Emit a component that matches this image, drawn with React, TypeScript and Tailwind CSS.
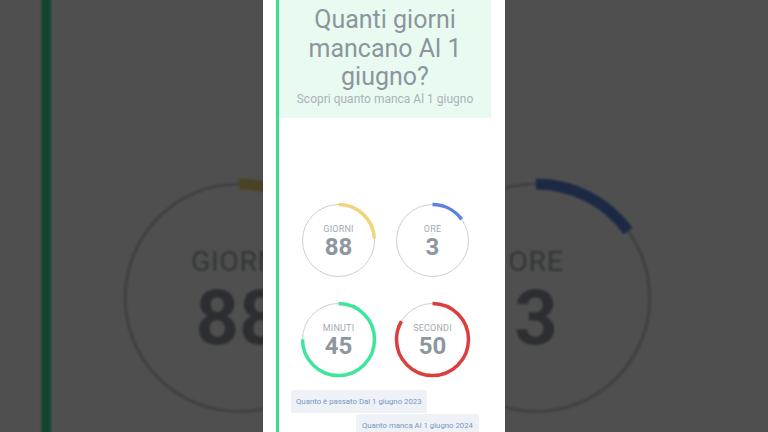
import React from 'react';

const rings = [
  { label: 'GIORNI', value: '88', pct: 88 / 365, color: '#f1d47c' },
  { label: 'ORE', value: '3', pct: 0.15, color: '#5b84e0' },
  { label: 'MINUTI', value: '45', pct: 45 / 60, color: '#3fe59b' },
  { label: 'SECONDI', value: '50', pct: 50 / 60, color: '#dc3d3d' },
];

function Ring({ label, value, pct, color }: { label: string; value: string; pct: number; color: string }) {
  const r = 36;
  const c = 2 * Math.PI * r;
  return (
    <div className="relative w-[73px] h-[73px]">
      <svg width="73" height="73" viewBox="0 0 73 73" className="absolute inset-0 overflow-visible">
        <circle cx="36.5" cy="36.5" r={r} fill="none" stroke="#c9d0d4" strokeWidth="1" />
        <circle
          cx="36.5"
          cy="36.5"
          r={r}
          fill="none"
          stroke={color}
          strokeWidth="3.5"
          strokeDasharray={`${c * pct} ${c}`}
          transform="rotate(-90 36.5 36.5)"
        />
      </svg>
      <div className="relative h-full flex flex-col items-center justify-center pt-[2px]">
        <span className="text-[9px] leading-[11px] text-[#a3aab1] tracking-[0.2px]">{label}</span>
        <span className="text-[24px] leading-[24px] font-bold text-[#8e969f]">{value}</span>
      </div>
    </div>
  );
}

function Screen() {
  return (
    <div className="w-[242px] h-[432px] bg-white flex font-['Roboto',sans-serif]">
      <div className="w-[13px] shrink-0" />
      <div className="flex-1 border-l-[3px] border-[#3ddc97] pr-[14px] flex flex-col">
        <div className="bg-[#e9fbf1] pt-[6px] pb-[11px] text-center">
          <h1 className="text-[25px] leading-[28.7px] text-[#8c959d] px-[16px]">
            Quanti giorni mancano Al 1 giugno?
          </h1>
          <p className="text-[12px] leading-[15px] text-[#a9b2ba]">Scopri quanto manca Al 1 giugno</p>
        </div>
        <div className="mt-[86px] pl-[1px] grid grid-cols-[73px_73px] gap-x-[21px] gap-y-[26px] justify-center">
          {rings.map((r) => (
            <Ring key={r.label} {...r} />
          ))}
        </div>
        <div className="mt-[14px] px-[12px] flex flex-col gap-[1px]">
          <div className="self-start h-[23px] px-[5px] flex items-center bg-[#eef2f7] rounded-[2px] text-[7.8px] text-[#7b95bf]">
            Quanto è passato Dal 1 giugno 2023
          </div>
          <div className="self-end h-[23px] px-[6px] flex items-center bg-[#eef2f7] rounded-[2px] text-[7.8px] text-[#7b95bf]">
            Quanto manca Al 1 giugno 2024
          </div>
        </div>
      </div>
    </div>
  );
}

export default function App() {
  return (
    <div className="relative w-[768px] h-[432px] overflow-hidden bg-[#4f4f4f] flex justify-center">
      <div className="absolute inset-0 flex justify-center brightness-[0.31]" aria-hidden>
        <div className="scale-[3.16] origin-[121.6px_214px] blur-[0.4px]">
          <Screen />
        </div>
      </div>
      <div className="relative">
        <Screen />
      </div>
    </div>
  );
}
